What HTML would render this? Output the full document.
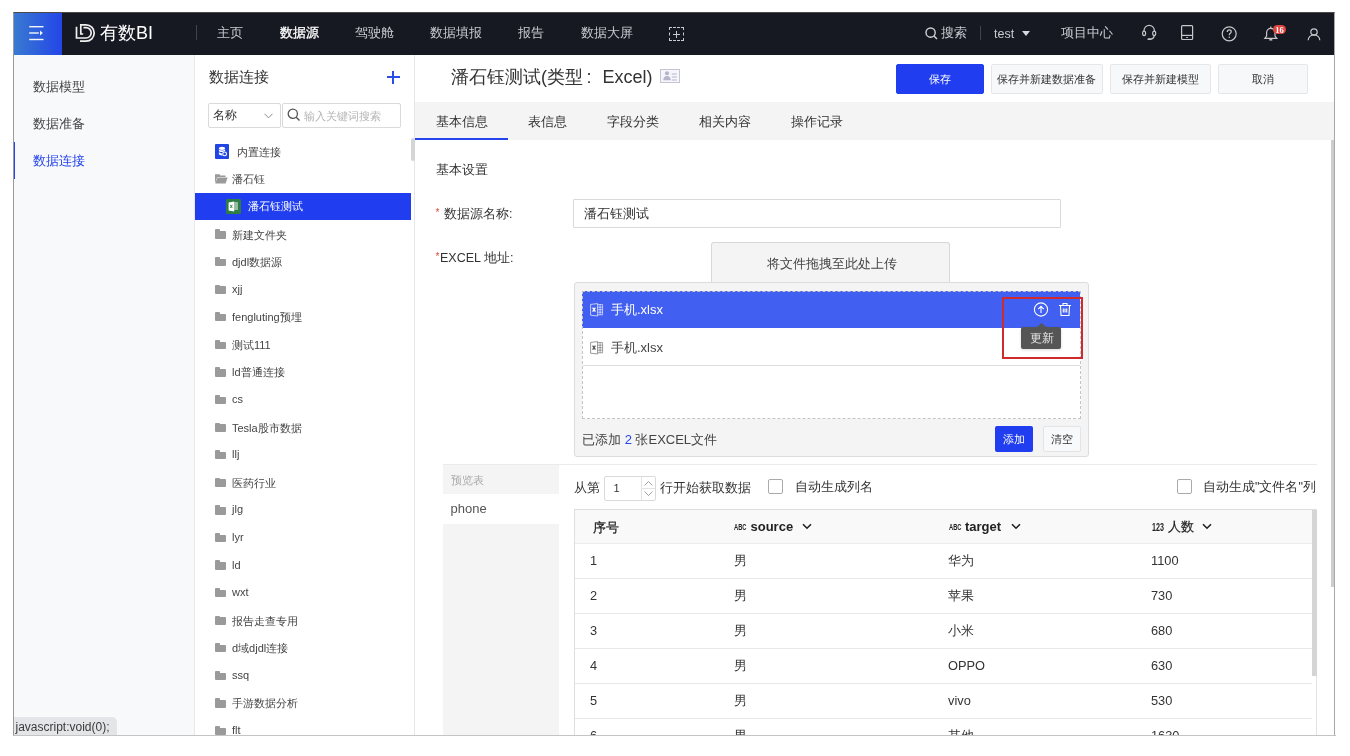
<!DOCTYPE html>
<html><head><meta charset="utf-8">
<style>
*{box-sizing:border-box;margin:0;padding:0}
html,body{width:1350px;height:756px;overflow:hidden;background:#fff;font-family:"Liberation Sans",sans-serif;color:#333}
.a{position:absolute;white-space:nowrap}
#frame{position:absolute;left:13px;top:12px;width:1322px;height:724px;border:1px solid #9a9a9a;border-right-color:#a8a8a8;border-bottom-color:#c4c4c4;border-top-color:#4a4a4a;pointer-events:none}
#hdr{position:absolute;left:13px;top:12px;width:1322px;height:43px;background:#161922}
#menu{position:absolute;left:13px;top:12px;width:49px;height:43px;background:linear-gradient(90deg,#3a7bd0,#2346e8)}
.nav{font-size:12.5px;color:#c9cbd0;top:25px}
#side{position:absolute;left:14px;top:55px;width:181px;height:680px;background:#f8f9fb;border-right:1px solid #e8e8ea}
.sitem{font-size:12.5px;color:#444;left:33px}
#tree{position:absolute;left:195px;top:55px;width:220px;height:680px;background:#fff;border-right:1px solid #e6e6e6}
.ti{font-size:11px;color:#444;left:232px}
.fold{position:absolute;left:215px;width:11px;height:7.6px;background:#9a9a9a;border-radius:0 1px 1px 1px}
.fold:before{content:"";position:absolute;left:0;top:-1.8px;width:4.6px;height:2px;background:#9a9a9a;border-radius:1px 1px 0 0}
#main{position:absolute;left:415px;top:55px;width:919px;height:680px;background:#fff}
.btn{position:absolute;top:64px;height:30px;border:1px solid #e4e6ea;background:#f7f8fa;border-radius:2px;font-size:11px;color:#333;text-align:center;line-height:28px}
.tab{font-size:12.5px;color:#333;top:114px}
.lbl{font-size:12.5px;color:#333}
</style></head><body><div id="root" style="position:absolute;left:0;top:0;width:1350px;height:756px;will-change:transform">
<div id="hdr"></div>
<div id="menu"></div>
<!-- menu icon -->
<svg class="a" style="left:28px;top:24.5px" width="18" height="16" viewBox="0 0 18 16">
<rect x="1.2" y="1" width="14.3" height="1.4" fill="#f4f6ff"/>
<rect x="1.2" y="7.3" width="9.6" height="1.4" fill="#f4f6ff"/>
<path d="M12 5.6 L14.8 8 L12 10.4 Z" fill="#f4f6ff"/>
<rect x="1.2" y="13.8" width="14.3" height="1.4" fill="#f4f6ff"/>
</svg>
<!-- logo -->
<svg class="a" style="left:70px;top:20px" width="30" height="26" viewBox="0 0 30 26" fill="none" stroke="#f0f0f0" stroke-width="1.7">
<path d="M13.2 14 H10.8 V4.8 H16 A8.2 8.2 0 0 1 16 21.2 H10"/>
<path d="M6.5 6.8 V18 H16 A5.2 5.2 0 0 0 16 7.6 H13.5"/>
</svg>
<div class="a" style="left:100px;top:21px;font-size:18px;color:#fff">有数BI</div>
<div class="a" style="left:196px;top:25px;width:1px;height:15px;background:#3f434c"></div>
<div class="a nav" style="left:217px">主页</div>
<div class="a nav" style="left:279.5px;color:#fff;-webkit-text-stroke:0.3px #fff">数据源</div>
<div class="a nav" style="left:355px">驾驶舱</div>
<div class="a nav" style="left:430px">数据填报</div>
<div class="a nav" style="left:518px">报告</div>
<div class="a nav" style="left:581px">数据大屏</div>
<div class="a" style="left:669px;top:27px;width:15px;height:14px;border:1px dashed #c9cbd0"></div>
<div class="a" style="left:673px;top:33.5px;width:7px;height:1px;background:#c9cbd0"></div>
<div class="a" style="left:676px;top:30.5px;width:1px;height:7px;background:#c9cbd0"></div>
<!-- right header -->
<svg class="a" style="left:925px;top:27px" width="13" height="13" viewBox="0 0 13 13"><circle cx="5.6" cy="5.6" r="4.6" fill="none" stroke="#d0d1d4" stroke-width="1.4"/><path d="M9 9 L12 12" stroke="#d0d1d4" stroke-width="1.5"/></svg>
<div class="a nav" style="left:941px">搜索</div>
<div class="a" style="left:980px;top:26px;width:1px;height:14px;background:#3f434c"></div>
<div class="a nav" style="left:994px;font-size:12.5px;top:26.5px">test</div>
<svg class="a" style="left:1022px;top:31px" width="9" height="6"><path d="M0 0 H8 L4 5 Z" fill="#d6d8dc"/></svg>
<div class="a nav" style="left:1061px">项目中心</div>
<!-- headset -->
<svg class="a" style="left:1136px;top:20px" width="64" height="26" viewBox="0 0 64 26" fill="none" stroke="#c6c7ca" stroke-width="1.2">
<path d="M8 12 V10.6 A5.2 5.2 0 0 1 18.4 10.6 V12"/>
<ellipse cx="8.1" cy="13.3" rx="1.5" ry="2.3"/>
<ellipse cx="18.2" cy="13.3" rx="1.5" ry="2.3"/>
<path d="M18.2 15.6 Q18 19.2 13.6 19.2"/>
<path d="M12.4 19.2 H13.8" stroke-width="1.8" stroke-linecap="round"/>
<rect x="45.6" y="5.6" width="11" height="13.9" rx="0.9"/>
<path d="M45.6 15.4 H56.6"/>
<path d="M50.2 17.5 H52" stroke-width="0.9"/>
</svg>
<!-- help -->
<svg class="a" style="left:1221px;top:26px" width="17" height="16" viewBox="0 0 17 16">
<circle cx="8.2" cy="7.8" r="7" fill="none" stroke="#c6c7ca" stroke-width="1.2"/>
<path d="M6.3 6 Q6.3 3.9 8.3 3.9 Q10.2 3.9 10.2 5.7 Q10.2 6.8 9 7.5 Q8.3 7.9 8.3 9.2" fill="none" stroke="#c6c7ca" stroke-width="1.3"/>
<circle cx="8.3" cy="11.3" r="0.8" fill="#c6c7ca"/>
</svg>
<!-- bell -->
<svg class="a" style="left:1263px;top:25px" width="16" height="17" viewBox="0 0 16 17" fill="none" stroke="#c6c7ca" stroke-width="1.2">
<path d="M1.8 13.3 H13.8 L12 11 V7.6 A4.2 4.2 0 0 0 3.6 7.6 V11 Z"/>
<path d="M7.8 1.6 V3.2"/>
<path d="M6.3 14.8 H9.3" stroke-width="1.5"/>
</svg>
<div class="a" style="left:1273px;top:24.5px;width:13px;height:9.5px;border-radius:5px;background:#e0453f;color:#fff;font-size:8.5px;line-height:10px;text-align:center;font-family:'Liberation Serif',serif;font-weight:bold">16</div>
<!-- user -->
<svg class="a" style="left:1307px;top:27px" width="14" height="14" viewBox="0 0 14 14" fill="none" stroke="#c6c7ca" stroke-width="1.2">
<circle cx="7" cy="5" r="3.2"/>
<path d="M1.2 13.3 A5.8 5.5 0 0 1 12.8 13.3"/>
</svg>

<!-- sidebar -->
<div id="side"></div>
<div class="a sitem" style="top:79px">数据模型</div>
<div class="a sitem" style="top:116px">数据准备</div>
<div class="a sitem" style="top:153px;color:#2544ec">数据连接</div>
<div class="a" style="left:13px;top:142px;width:2px;height:37px;background:#2544ec"></div>
<div class="a" style="left:13px;top:717px;width:104px;height:18px;background:#e4e5e9;border-radius:0 5px 0 0;font-size:12px;color:#3a3a3a;line-height:21px;padding-left:2.5px">javascript:void(0);</div>

<!-- tree panel -->
<div id="tree"></div>
<div class="a" style="left:209px;top:68px;font-size:14.5px;color:#333">数据连接</div>
<div class="a" style="left:386.6px;top:76.2px;width:13.2px;height:2px;background:#2a4de8"></div>
<div class="a" style="left:392.2px;top:70.6px;width:2px;height:13.2px;background:#2a4de8"></div>

<!-- select + search -->
<div class="a" style="left:207.5px;top:103px;width:73px;height:25px;border:1px solid #dadada;border-radius:2px"></div>
<div class="a" style="left:213px;top:108px;font-size:11.5px;color:#333">名称</div>
<svg class="a" style="left:264px;top:113px" width="9" height="6" viewBox="0 0 9 6"><path d="M0.5 0.8 L4.5 4.8 L8.5 0.8" fill="none" stroke="#888" stroke-width="1"/></svg>
<div class="a" style="left:281.5px;top:103px;width:119px;height:25px;border:1px solid #dadada;border-radius:2px"></div>
<svg class="a" style="left:287px;top:108px" width="14" height="14" viewBox="0 0 14 14"><circle cx="5.8" cy="5.8" r="4.6" fill="none" stroke="#555" stroke-width="1.3"/><path d="M9.2 9.2 L12.5 12.5" stroke="#555" stroke-width="1.4"/></svg>
<div class="a" style="left:304px;top:108.5px;font-size:11px;color:#b4b4b4">输入关键词搜索</div>
<!-- scrollbar -->
<div class="a" style="left:411px;top:138px;width:3.5px;height:23px;background:#d5d5d5;border-radius:2px"></div>
<!-- tree items -->
<div class="a" style="left:214.8px;top:144px;width:14.7px;height:14.7px;background:#2045e2;border-radius:1px"></div>
<svg class="a" style="left:214.8px;top:144px" width="15" height="15" viewBox="0 0 15 15">
<ellipse cx="7" cy="4.3" rx="3.1" ry="1.6" fill="#fff"/>
<path d="M3.9 5.6 Q7 7.4 10.1 5.6 V7.2 Q7 9 3.9 7.2 Z" fill="#fff"/>
<path d="M3.9 8.3 Q7 10 8 9.6 V11.6 Q7 12 3.9 10.6 Z" fill="#fff"/>
<circle cx="9.6" cy="9.9" r="2.7" fill="#2045e2"/>
<circle cx="9.6" cy="9.9" r="1.9" fill="none" stroke="#fff" stroke-width="1.1"/>
</svg>
<div class="a ti" style="left:237px;top:145px">内置连接</div>
<svg class="a" style="left:215px;top:174px" width="13" height="10" viewBox="0 0 13 10"><path d="M0 0.3 H4.5 L5.5 1.6 H10.5 V3 H2.2 L0 9.6 Z" fill="#9a9a9a"/><path d="M0.3 9.6 L2.4 3.6 H12.6 L10.6 9.6 Z" fill="#9a9a9a"/></svg>
<div class="a ti" style="top:172px">潘石钰</div>
<div class="a" style="left:195px;top:192.5px;width:216px;height:27.7px;background:#203ef0"></div>
<div class="a" style="left:226px;top:199.4px;width:14.6px;height:14.4px;background:#2e7d45;border-radius:1px"></div>
<svg class="a" style="left:226px;top:199px" width="15" height="15" viewBox="0 0 15 15"><path d="M2.6 3.6 L8.2 2.6 V12.6 L2.6 11.6 Z" fill="#fff"/><path d="M8.2 4 H12 M8.2 6 H12 M8.2 8 H12 M8.2 10 H12" stroke="#fff" stroke-width="1"/><path d="M4.3 5.8 L6.3 9 M6.3 5.8 L4.3 9" stroke="#2e7d45" stroke-width="0.9"/></svg>
<div class="a ti" style="left:248px;top:199px;color:#fff">潘石钰测试</div>
<div class="fold" style="top:231.2px"></div>
<div class="a ti" style="top:227.5px">新建文件夹</div>
<div class="fold" style="top:258.8px"></div>
<div class="a ti" style="top:255.1px">djdl数据源</div>
<div class="fold" style="top:286.4px"></div>
<div class="a ti" style="top:282.7px">xjj</div>
<div class="fold" style="top:313.9px"></div>
<div class="a ti" style="top:310.2px">fengluting预埋</div>
<div class="fold" style="top:341.5px"></div>
<div class="a ti" style="top:337.8px">测试111</div>
<div class="fold" style="top:369.1px"></div>
<div class="a ti" style="top:365.4px">ld普通连接</div>
<div class="fold" style="top:396.7px"></div>
<div class="a ti" style="top:393.0px">cs</div>
<div class="fold" style="top:424.3px"></div>
<div class="a ti" style="top:420.6px">Tesla股市数据</div>
<div class="fold" style="top:451.8px"></div>
<div class="a ti" style="top:448.1px">llj</div>
<div class="fold" style="top:479.4px"></div>
<div class="a ti" style="top:475.7px">医药行业</div>
<div class="fold" style="top:507.0px"></div>
<div class="a ti" style="top:503.3px">jlg</div>
<div class="fold" style="top:534.6px"></div>
<div class="a ti" style="top:530.9px">lyr</div>
<div class="fold" style="top:562.2px"></div>
<div class="a ti" style="top:558.5px">ld</div>
<div class="fold" style="top:589.7px"></div>
<div class="a ti" style="top:586.0px">wxt</div>
<div class="fold" style="top:617.3px"></div>
<div class="a ti" style="top:613.6px">报告走查专用</div>
<div class="fold" style="top:644.9px"></div>
<div class="a ti" style="top:641.2px">d域djdl连接</div>
<div class="fold" style="top:672.5px"></div>
<div class="a ti" style="top:668.8px">ssq</div>
<div class="fold" style="top:700.1px"></div>
<div class="a ti" style="top:696.4px">手游数据分析</div>
<div class="fold" style="top:727.6px"></div>
<div class="a ti" style="top:723.9px">flt</div>
<!-- main title -->
<div class="a" style="left:451px;top:65px;font-size:18px;color:#333">潘石钰测试(类型<span style="display:inline-block;width:19.5px;padding-left:3.5px">:</span>Excel)</div>
<svg class="a" style="left:660px;top:69px" width="20" height="14" viewBox="0 0 20 14"><rect x="0.5" y="0.5" width="19" height="13" fill="#f6f6fa" stroke="#c3c4d6" stroke-width="1"/><circle cx="7" cy="4.3" r="2.1" fill="#b5b6ca"/><path d="M3.2 11.2 Q3.6 7 7 7 Q10.4 7 10.8 11.2 Z" fill="#b5b6ca"/><path d="M11.8 5 H16.8 M11.8 8 H16.8 M11.8 11 H16.8" stroke="#b5b6ca" stroke-width="1"/></svg>
<!-- buttons -->
<div class="btn" style="left:895.5px;width:88.5px;background:#203ef0;border-color:#203ef0;color:#fff">保存</div>
<div class="btn" style="left:991px;width:111.5px">保存并新建数据准备</div>
<div class="btn" style="left:1110px;width:101px">保存并新建模型</div>
<div class="btn" style="left:1218px;width:89.5px">取消</div>
<!-- tabs -->
<div class="a" style="left:415px;top:102px;width:919px;height:38px;background:#f4f4f4"></div>
<div class="a" style="left:415px;top:137.5px;width:92.5px;height:2px;background:#2544ec"></div>
<div class="a tab" style="left:436px">基本信息</div>
<div class="a tab" style="left:528px">表信息</div>
<div class="a tab" style="left:607px">字段分类</div>
<div class="a tab" style="left:699px">相关内容</div>
<div class="a tab" style="left:791px">操作记录</div>
<!-- page scrollbar -->
<div class="a" style="left:1331px;top:140px;width:3px;height:447px;background:#cdcdcd"></div>
<!-- form -->
<div class="a lbl" style="left:436px;top:162px">基本设置</div>
<div class="a" style="left:435.5px;top:207px;font-size:10px;color:#e0453f">*</div>
<div class="a lbl" style="left:444px;top:205.5px">数据源名称:</div>
<div class="a" style="left:573px;top:198.5px;width:487.5px;height:29px;border:1px solid #d9d9d9;border-radius:1px"></div>
<div class="a lbl" style="left:584px;top:205.5px">潘石钰测试</div>
<div class="a" style="left:435.5px;top:251px;font-size:10px;color:#e0453f">*</div>
<div class="a lbl" style="left:440px;top:249.5px">EXCEL 地址:</div>
<!-- upload -->
<div class="a" style="left:711px;top:242px;width:239px;height:41px;background:#f4f4f4;border:1px solid #d8d8d8;border-bottom:none;border-radius:3px 3px 0 0"></div>
<div class="a" style="left:767px;top:255.5px;font-size:12.8px;color:#444">将文件拖拽至此处上传</div>
<div class="a" style="left:574px;top:282px;width:515px;height:174.5px;background:#f4f4f4;border:1px solid #dcdcdc;border-radius:3px"></div>
<div class="a" style="left:582px;top:291px;width:498.5px;height:128px;background:#fff"></div>
<div class="a" style="left:582px;top:290.5px;width:497.5px;height:37.5px;background:#415ff0"></div>
<div class="a" style="left:582px;top:290.5px;width:498.5px;height:128.5px;border:1px dashed #c4c4c4"></div>
<div class="a" style="left:583px;top:365px;width:497px;height:1px;background:#dedede"></div>
<!-- file rows -->
<svg class="a" style="left:589.5px;top:303.3px" width="14" height="14" viewBox="0 0 14 14" fill="none" stroke="#eef1ff" stroke-width="0.75"><path d="M0.6 1.4 L7.6 0.6 V13 L0.6 12.2 Z"/><path d="M7.6 1.6 H12.6 V11.8 H7.6 M7.6 4.2 H12.6 M7.6 6.7 H12.6 M7.6 9.2 H12.6 M10.1 1.6 V11.8" stroke-width="0.7"/><path d="M2.6 4.6 L5.4 8.6 M5.4 4.6 L2.6 8.6" stroke="#fff" stroke-width="1.3"/></svg>
<div class="a" style="left:611px;top:300.6px;font-size:13px;color:#fff">手机.xlsx</div>
<svg class="a" style="left:589.5px;top:340.8px" width="14" height="14" viewBox="0 0 14 14" fill="none" stroke="#777" stroke-width="0.75"><path d="M0.6 1.4 L7.6 0.6 V13 L0.6 12.2 Z"/><path d="M7.6 1.6 H12.6 V11.8 H7.6 M7.6 4.2 H12.6 M7.6 6.7 H12.6 M7.6 9.2 H12.6 M10.1 1.6 V11.8" stroke-width="0.7"/><path d="M2.6 4.6 L5.4 8.6 M5.4 4.6 L2.6 8.6" stroke="#555" stroke-width="1.3"/></svg>
<div class="a" style="left:611px;top:339px;font-size:13px;color:#444">手机.xlsx</div>
<!-- upload icon / trash -->
<svg class="a" style="left:1033px;top:302px" width="16" height="16" viewBox="0 0 16 16" fill="none" stroke="#fff" stroke-width="1.1"><circle cx="8" cy="7.5" r="6.6"/><path d="M8 11 V4.5 M5.2 7.2 L8 4.4 L10.8 7.2"/></svg>
<svg class="a" style="left:1058px;top:302px" width="14" height="15" viewBox="0 0 14 15" fill="none" stroke="#fff" stroke-width="1.1"><path d="M1 3.5 H13 M5 3.5 V1.5 H9 V3.5"/><path d="M2.5 3.5 L3 13.5 H11 L11.5 3.5"/><path d="M5.3 6.5 V10.5 M7 6.5 V10.5 M8.7 6.5 V10.5"/></svg>
<!-- tooltip -->
<div class="a" style="left:1021px;top:327.2px;width:40px;height:21.7px;background:#555;border-radius:2px;box-shadow:0 1px 3px rgba(0,0,0,.15)"></div>
<svg class="a" style="left:1035.5px;top:323px" width="11" height="5" viewBox="0 0 11 5"><path d="M0 5 L5.5 0 L11 5 Z" fill="#555"/></svg>
<div class="a" style="left:1029.5px;top:329.5px;font-size:12px;color:#e6e6e6">更新</div>
<!-- red rect -->
<div class="a" style="left:1002px;top:296.8px;width:81px;height:62.6px;border:2px solid #cf2a2e"></div>
<!-- footer of file box -->
<div class="a" style="left:582px;top:430.5px;font-size:13px;color:#444">已添加 <span style="color:#2544ec">2</span> 张EXCEL文件</div>
<div class="a" style="left:995px;top:426px;width:38px;height:26px;background:#203ef0;border-radius:2px;color:#fff;font-size:11px;line-height:26px;text-align:center">添加</div>
<div class="a" style="left:1043px;top:426px;width:38px;height:26px;background:#f8f9fb;border:1px solid #e4e4e4;border-radius:2px;color:#333;font-size:11px;line-height:24px;text-align:center">清空</div>
<!-- preview -->
<div class="a" style="left:443px;top:463.5px;width:874px;height:1px;background:#ebebeb"></div>
<div class="a" style="left:443px;top:464.5px;width:116px;height:271px;background:#f4f4f4"></div>
<div class="a" style="left:443px;top:494px;width:116px;height:30px;background:#fff"></div>
<div class="a" style="left:450.5px;top:474px;font-size:10.5px;color:#aaa">预览表</div>
<div class="a" style="left:450.5px;top:501px;font-size:13px;color:#555">phone</div>
<div class="a lbl" style="left:574px;top:479.5px;font-size:12.5px">从第</div>
<div class="a" style="left:603.5px;top:475.5px;width:52.5px;height:25.5px;border:1px solid #d9d9d9;border-radius:2px"></div>
<div class="a" style="left:641px;top:477px;width:1px;height:23px;background:#e3e3e3"></div>
<div class="a" style="left:642px;top:488px;width:13px;height:1px;background:#e3e3e3"></div>
<div class="a" style="left:613.5px;top:481.5px;font-size:11px;color:#333">1</div>
<svg class="a" style="left:643px;top:479px" width="11" height="20" viewBox="0 0 11 20" fill="none" stroke="#999" stroke-width="0.9"><path d="M1.5 6.5 L5.5 2.5 L9.5 6.5"/><path d="M1.5 12.5 L5.5 16.5 L9.5 12.5"/></svg>
<div class="a lbl" style="left:660px;top:479.5px;font-size:12.5px">行开始获取数据</div>
<div class="a" style="left:767.5px;top:478.7px;width:15px;height:15px;border:1px solid #aaa;border-radius:2px;background:#fff"></div>
<div class="a lbl" style="left:795px;top:479px;font-size:12.5px">自动生成列名</div>
<div class="a" style="left:1176.5px;top:478.7px;width:15px;height:15px;border:1px solid #aaa;border-radius:2px;background:#fff"></div>
<div class="a lbl" style="left:1203px;top:479px;font-size:12.5px">自动生成"文件名"列</div>
<!-- table -->
<div class="a" style="left:573.5px;top:509px;width:743px;height:230px;border:1px solid #dedede;border-right:none;background:#fff"></div>
<div class="a" style="left:574.5px;top:510px;width:738px;height:33px;background:#f9f9f9"></div>
<div class="a" style="left:1316px;top:509px;width:1px;height:226px;background:#e3e3e3"></div>
<div class="a" style="left:1311.5px;top:510px;width:5px;height:166px;background:#d5d5d5"></div>
<div class="a" style="left:593px;top:519px;font-size:13px;color:#222;-webkit-text-stroke:0.25px #222">序号</div>
<div class="a" style="left:734px;top:522.5px;font-size:9px;line-height:9px;color:#222;font-weight:bold;transform:scaleX(0.64);transform-origin:0 0">ABC</div>
<div class="a" style="left:750.5px;top:519px;font-size:13px;color:#222;font-weight:bold">source</div>
<svg class="a" style="left:801.5px;top:523px" width="10" height="7" viewBox="0 0 10 7"><path d="M1 1.2 L5 5.2 L9 1.2" fill="none" stroke="#222" stroke-width="1.6"/></svg>
<div class="a" style="left:948.5px;top:522.5px;font-size:9px;line-height:9px;color:#222;font-weight:bold;transform:scaleX(0.64);transform-origin:0 0">ABC</div>
<div class="a" style="left:965px;top:519px;font-size:13px;color:#222;font-weight:bold">target</div>
<svg class="a" style="left:1011px;top:523px" width="10" height="7" viewBox="0 0 10 7"><path d="M1 1.2 L5 5.2 L9 1.2" fill="none" stroke="#222" stroke-width="1.6"/></svg>
<div class="a" style="left:1151.5px;top:521.5px;font-size:10.5px;line-height:10px;color:#222;font-weight:bold;transform:scaleX(0.68);transform-origin:0 0">123</div>
<div class="a" style="left:1167.5px;top:517.8px;font-size:13px;color:#222;-webkit-text-stroke:0.2px #222">人数</div>
<svg class="a" style="left:1202px;top:523px" width="10" height="7" viewBox="0 0 10 7"><path d="M1 1.2 L5 5.2 L9 1.2" fill="none" stroke="#222" stroke-width="1.6"/></svg>
<div class="a" style="left:574.5px;top:543px;width:737px;height:1px;background:#ececec"></div>
<div class="a" style="left:590px;top:553px;font-size:12.8px;color:#333">1</div>
<div class="a" style="left:734px;top:553px;font-size:12.8px;color:#333">男</div>
<div class="a" style="left:948px;top:553px;font-size:12.8px;color:#333">华为</div>
<div class="a" style="left:1151px;top:553px;font-size:12.8px;color:#333">1100</div>
<div class="a" style="left:574.5px;top:578px;width:737px;height:1px;background:#e8e8e8"></div>
<div class="a" style="left:590px;top:588px;font-size:12.8px;color:#333">2</div>
<div class="a" style="left:734px;top:588px;font-size:12.8px;color:#333">男</div>
<div class="a" style="left:948px;top:588px;font-size:12.8px;color:#333">苹果</div>
<div class="a" style="left:1151px;top:588px;font-size:12.8px;color:#333">730</div>
<div class="a" style="left:574.5px;top:613px;width:737px;height:1px;background:#e8e8e8"></div>
<div class="a" style="left:590px;top:623px;font-size:12.8px;color:#333">3</div>
<div class="a" style="left:734px;top:623px;font-size:12.8px;color:#333">男</div>
<div class="a" style="left:948px;top:623px;font-size:12.8px;color:#333">小米</div>
<div class="a" style="left:1151px;top:623px;font-size:12.8px;color:#333">680</div>
<div class="a" style="left:574.5px;top:648px;width:737px;height:1px;background:#e8e8e8"></div>
<div class="a" style="left:590px;top:658px;font-size:12.8px;color:#333">4</div>
<div class="a" style="left:734px;top:658px;font-size:12.8px;color:#333">男</div>
<div class="a" style="left:948px;top:658px;font-size:12.8px;color:#333">OPPO</div>
<div class="a" style="left:1151px;top:658px;font-size:12.8px;color:#333">630</div>
<div class="a" style="left:574.5px;top:683px;width:737px;height:1px;background:#e8e8e8"></div>
<div class="a" style="left:590px;top:693px;font-size:12.8px;color:#333">5</div>
<div class="a" style="left:734px;top:693px;font-size:12.8px;color:#333">男</div>
<div class="a" style="left:948px;top:693px;font-size:12.8px;color:#333">vivo</div>
<div class="a" style="left:1151px;top:693px;font-size:12.8px;color:#333">530</div>
<div class="a" style="left:574.5px;top:718px;width:737px;height:1px;background:#e8e8e8"></div>
<div class="a" style="left:590px;top:728px;font-size:12.8px;color:#333">6</div>
<div class="a" style="left:734px;top:728px;font-size:12.8px;color:#333">男</div>
<div class="a" style="left:948px;top:728px;font-size:12.8px;color:#333">其他</div>
<div class="a" style="left:1151px;top:728px;font-size:12.8px;color:#333">1630</div>
<div class="a" style="left:13px;top:735px;width:1323px;height:21px;background:#fff;border-top:1px solid #c4c4c4"></div>
<div id="frame"></div>
</div></body></html>
